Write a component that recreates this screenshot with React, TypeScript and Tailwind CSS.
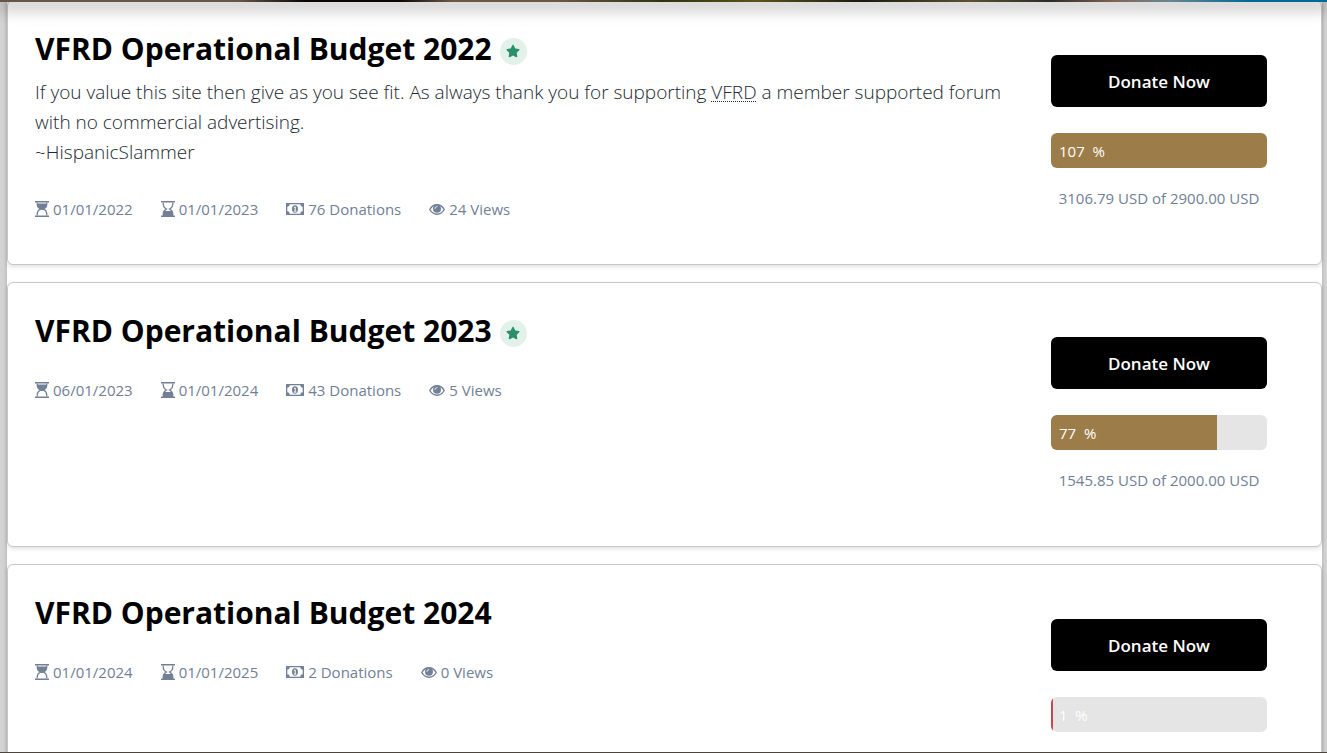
import type { ReactNode } from 'react';
import { FaStar } from 'react-icons/fa';

type Campaign = {
  title: string;
  featured: boolean;
  description?: ReactNode;
  start: string;
  end: string;
  donations: number;
  views: number;
  percent: number;
  totals?: string;
};

const campaigns: Campaign[] = [
  {
    title: 'VFRD Operational Budget 2022',
    featured: true,
    description: (
      <>
        If you value this site then give as you see fit. As always thank you for supporting{' '}
        <abbr className="underline decoration-dotted decoration-1 underline-offset-2">VFRD</abbr> a member supported forum
        with no commercial advertising.
        <br />
        ~HispanicSlammer
      </>
    ),
    start: '01/01/2022',
    end: '01/01/2023',
    donations: 76,
    views: 24,
    percent: 107,
    totals: '3106.79 USD of 2900.00 USD',
  },
  {
    title: 'VFRD Operational Budget 2023',
    featured: true,
    start: '06/01/2023',
    end: '01/01/2024',
    donations: 43,
    views: 5,
    percent: 77,
    totals: '1545.85 USD of 2000.00 USD',
  },
  {
    title: 'VFRD Operational Budget 2024',
    featured: false,
    start: '01/01/2024',
    end: '01/01/2025',
    donations: 2,
    views: 0,
    percent: 1,
  },
];

const glass =
  'M2.200 1.500v1.500c0 2.600 1.400 4 3.300 5-1.900 1-3.300 2.400-3.300 5v1.500M11.800 1.500v1.500c0 2.600-1.400 4-3.300 5 1.900 1 3.300 2.400 3.300 5v1.500';

function HourglassTop() {
  return (
    <svg viewBox="0 0 14 16" className="h-4 w-3.5" fill="none" stroke="currentColor" aria-hidden>
      <path d="M0 .75h14M0 15.250h14" strokeWidth="1.500" />
      <path d={glass} strokeWidth="1.200" />
      <path d="M2 2.500h10c0 3-1.200 4.500-3.200 5.500v1H5.200V8C3.200 7 2 5.500 2 2.500z" fill="currentColor" stroke="none" />
    </svg>
  );
}

function HourglassBottom() {
  return (
    <svg viewBox="0 0 14 16" className="h-4 w-3.5" fill="none" stroke="currentColor" aria-hidden>
      <path d="M0 .75h14M0 15.250h14" strokeWidth="1.500" />
      <path d={glass} strokeWidth="1.200" />
      <path d="M2 15v-2c0-1.200.4-2.200 1.100-3h7.800c.7.8 1.100 1.800 1.100 3v2z" fill="currentColor" stroke="none" />
    </svg>
  );
}

function Banknote() {
  return (
    <svg viewBox="0 0 18 12" className="h-3 w-[18px]" aria-hidden>
      <path
        fill="currentColor"
        fillRule="evenodd"
        d="M.6 0h16.800q.6 0 .6.600v10.800q0 .6-.6.600H.6q-.6 0-.6-.6V.6Q0 0 .6 0zM3.700 1.300A2.400 2.400 0 0 1 1.300 3.700v4.600a2.400 2.400 0 0 1 2.400 2.400h10.600a2.400 2.400 0 0 1 2.400-2.400V3.700a2.400 2.400 0 0 1-2.400-2.400z"
      />
      <ellipse cx="9" cy="6" rx="3" ry="3.700" fill="currentColor" />
      <path d="M8 4.600l1.200-.7v4M7.900 8.100h2.500" fill="none" stroke="white" strokeWidth="1" />
    </svg>
  );
}

function Eye() {
  return (
    <svg viewBox="0 0 16 12" className="h-3 w-4" fill="none" aria-hidden>
      <path
        d="M.8 6.500C2.500 3.500 5 1.800 8 1.800s5.500 1.700 7.200 4.700C13.500 9.500 11 11.200 8 11.200S2.500 9.500.8 6.500z"
        stroke="currentColor"
        strokeWidth="1.400"
      />
      <circle cx="8" cy="5.800" r="4" fill="currentColor" />
      <path d="M5.900 5.600A2.100 2.100 0 0 1 8 3.500" stroke="white" strokeWidth=".8" strokeLinecap="round" />
    </svg>
  );
}

function Meta({ icon, children }: { icon: ReactNode; children: ReactNode }) {
  return (
    <li className="flex items-center gap-1">
      {icon}
      <span>{children}</span>
    </li>
  );
}

function CampaignCard({ campaign }: { campaign: Campaign }) {
  const { title, featured, description, start, end, donations, views, percent, totals } = campaign;

  return (
    <article className="flex rounded-md border border-[#c8c8c8] bg-white pr-[54px] pl-[27px] shadow-[0_2px_4px_rgba(0,0,0,0.12)]">
      <div className="min-w-0 flex-1 pt-7 pr-10">
        <div className="flex items-center gap-2">
          <h2 className="text-[30px] leading-10 font-bold text-black">{title}</h2>
          {featured && (
            <span className="mt-1 flex size-[27px] items-center justify-center rounded-full bg-[#e2f2eb] text-[#2b8f6b]">
              <FaStar className="size-3.5" aria-label="Featured" />
            </span>
          )}
        </div>
        {description && (
          <p className="pt-2 pb-[3px] text-[19px] leading-[30px] font-light text-[#212930]">{description}</p>
        )}
        <ul className="mt-[27px] flex gap-7 text-[15px] leading-6 text-[#718096]">
          <Meta icon={<HourglassTop />}>{start}</Meta>
          <Meta icon={<HourglassBottom />}>{end}</Meta>
          <Meta icon={<Banknote />}>{donations} Donations</Meta>
          <Meta icon={<Eye />}>{views} Views</Meta>
        </ul>
      </div>
      <div className="w-[216px] shrink-0 py-[54px]">
        <button type="button" className="h-[52px] w-full rounded-md bg-black pt-0.5 text-[17px] font-semibold text-white">
          Donate Now
        </button>
        <div className="relative mt-[26px] h-[35px] overflow-hidden rounded-md bg-[#e4e5e4]">
          <div
            className={percent < 50 ? 'h-full bg-[#c9474f]' : 'h-full bg-[#9c7c48]'}
            style={{ width: `${Math.min(percent, 100)}%` }}
          />
          <span className="absolute inset-y-0 left-2 flex items-center pt-0.5 text-[15px] font-medium whitespace-pre text-white">
            {`${percent}  %`}
          </span>
        </div>
        {totals && (
          <p className="mt-[18px] text-center text-[15px] leading-6 whitespace-nowrap text-[#718096]">{totals}</p>
        )}
      </div>
    </article>
  );
}

export default function App() {
  return (
    <div className="h-screen overflow-hidden bg-[#d3d3d3] font-['Segoe_UI','Open_Sans',sans-serif]">
      <div className="fixed inset-x-0 top-0 z-10 h-0.5 bg-[linear-gradient(to_right,#65554a_0%,#65554a_18%,#0a0604_23%,#0a0604_30%,#6b5647_34%,#6b5647_42%,#2f330c_50%,#5a531c_57%,#1d190f_65%,#5c5230_73%,#2b2a26_79%,#806455_84%,#6a8791_88%,#006a96_94%)] shadow-[0_3px_16px_3px_rgba(0,0,0,0.35)]" />
      <main className="mr-[5px] ml-[7px] flex flex-col gap-[17px] bg-white shadow-[0_0_4px_rgba(0,0,0,0.2)]">
        {campaigns.map((campaign) => (
          <CampaignCard key={campaign.title} campaign={campaign} />
        ))}
      </main>
      <div className="fixed inset-x-0 bottom-0 h-px bg-[#4c433c]" />
    </div>
  );
}
